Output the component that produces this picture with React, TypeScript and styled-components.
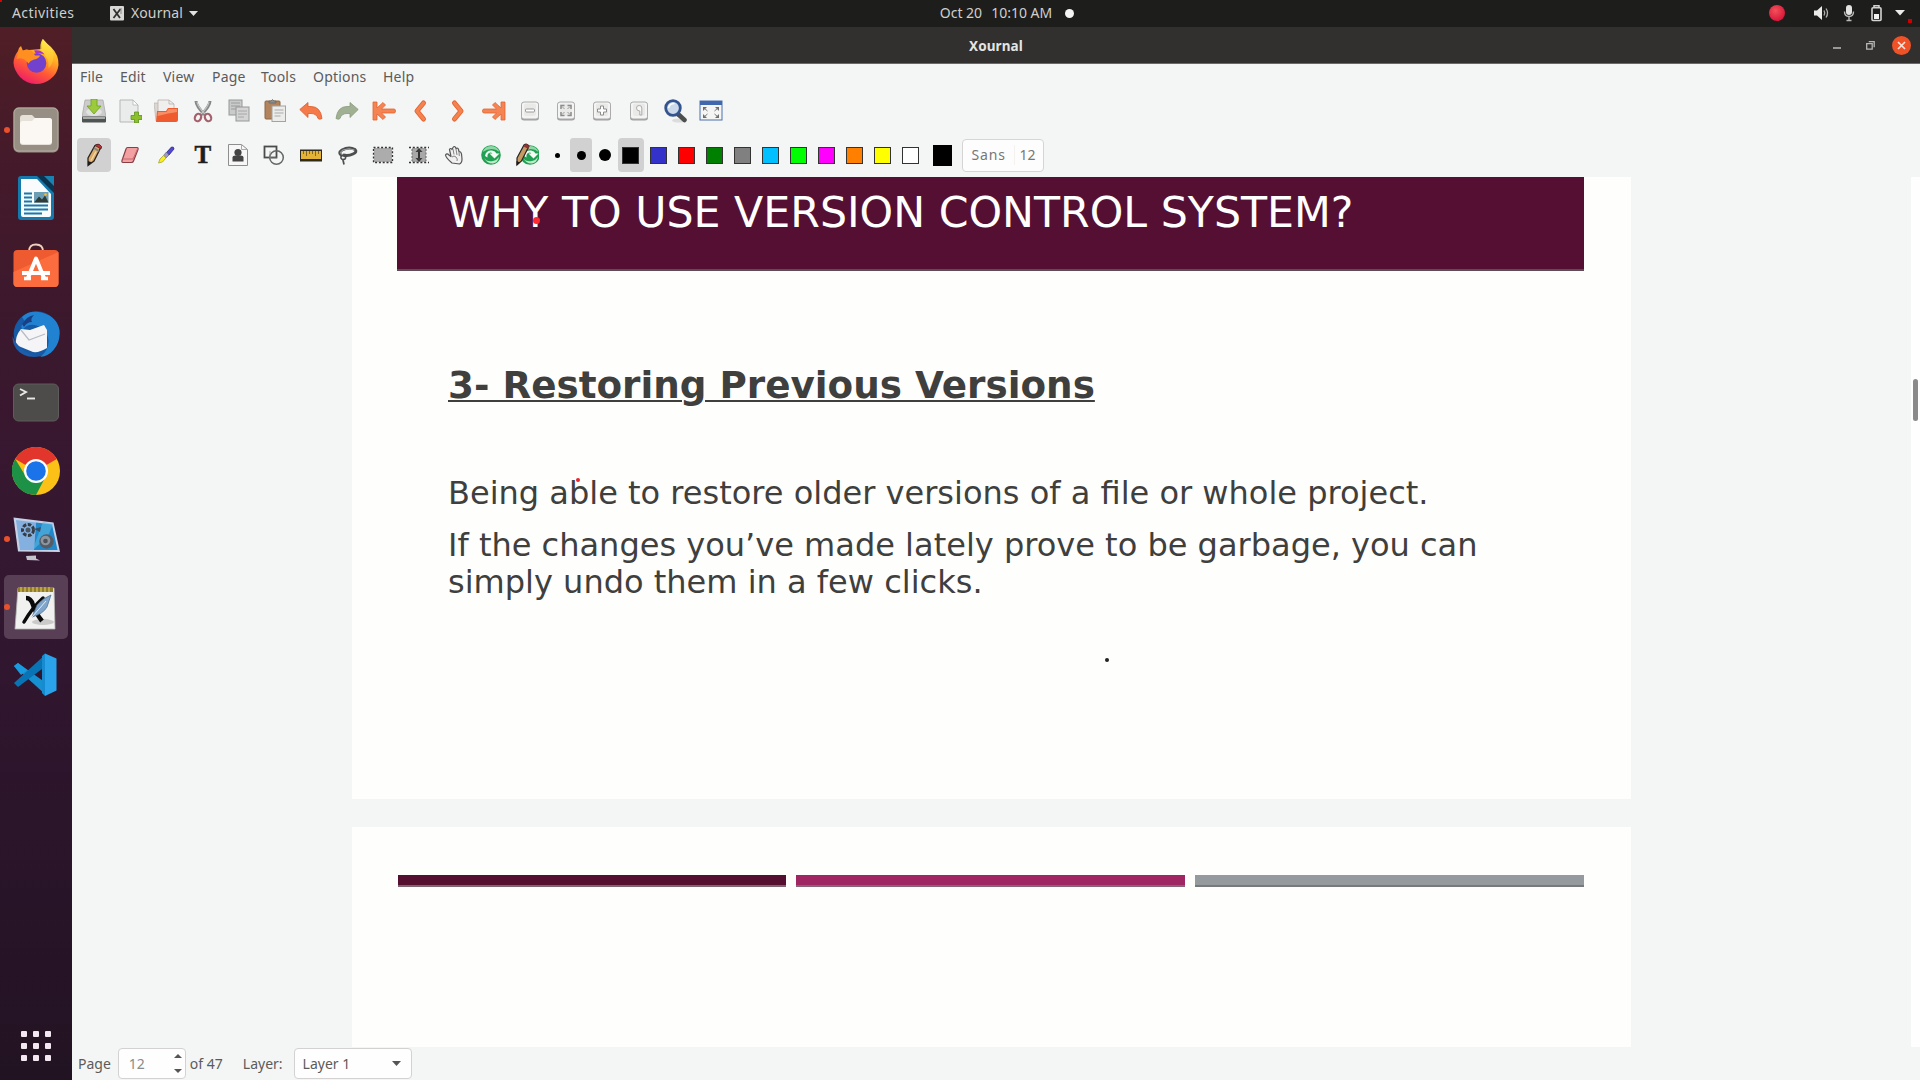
import React from 'react';
import styled, { createGlobalStyle, css } from 'styled-components';

const GlobalStyle = createGlobalStyle`
  * { box-sizing: border-box; }
  body { margin: 0; background: #f4f5f5; overflow: hidden; }
  svg { display: block; flex: none; }
`;

const Desktop = styled.div`
  position: relative;
  display: grid;
  grid-template: 27px 1053px / 72px 1848px;
  width: 1920px;
  height: 1080px;
  font: 14px/20px 'Noto Sans', 'Open Sans', sans-serif;
  color: #5b5b5b;
`;

/* ---------- system bar ---------- */
const SystemBar = styled.header`
  grid-column: 1 / 3;
  display: grid;
  grid-template-columns: 1fr auto 1fr;
  align-items: center;
  padding-bottom: 1px;
  background: #1d1d1b;
  color: #cfcfcd;
`;
const BarLeft = styled.div`
  display: flex;
  align-items: center;
  padding-left: 12px;
`;
const Activities = styled.span`
  width: 98px;
  letter-spacing: 0.4px;
`;
const AppName = styled.span`
  margin: 0 6px 0 7px;
  letter-spacing: 0.1px;
`;
const Clock = styled.div`
  display: flex;
  align-items: center;
  gap: 9px;
  padding-left: 94px;
`;
const NoticeDot = styled.i`
  width: 9px;
  height: 9px;
  margin-left: 4px;
  border-radius: 50%;
  background: #f4f4f4;
`;
const Tray = styled.div`
  display: flex;
  justify-content: flex-end;
  align-items: center;
  padding-right: 11px;
`;
const RecordDot = styled.i`
  width: 16px;
  height: 16px;
  margin-right: 28px;
  border-radius: 50%;
  background: radial-gradient(circle at 40% 35%, #f2505a, #d8163a 75%);
`;

/* ---------- dock ---------- */
const Dock = styled.nav`
  display: flex;
  flex-direction: column;
  align-items: center;
  gap: 4.1px;
  padding-top: 3px;
  background: linear-gradient(#501e26 0%, #451a2a 12%, #3a182e 32%, #341731 50%, #2b152b 75%, #221322 100%);
`;
const DockItem = styled.div<{ $active?: boolean; $running?: boolean }>`
  position: relative;
  display: flex;
  align-items: center;
  justify-content: center;
  width: 64px;
  height: 64px;
  border-radius: 5px;
  background: ${p => (p.$active ? '#583f56' : 'transparent')};
  ${p => p.$running && css`
    &::before {
      content: '';
      position: absolute;
      left: 0;
      top: 29px;
      width: 6px;
      height: 6px;
      border-radius: 50%;
      background: #e9502b;
    }
  `}
`;
const AppGrid = styled.div`
  display: grid;
  grid-template-columns: repeat(3, 6px);
  grid-auto-rows: 6px;
  gap: 6px;
  margin-top: auto;
  margin-bottom: 19px;
`;
const GridDot = styled.i`
  border-radius: 1px;
  background: #f4e9f2;
`;

/* ---------- window ---------- */
const Window = styled.main`
  display: flex;
  flex-direction: column;
  background: #f4f5f5;
`;
const TitleBar = styled.div`
  display: grid;
  grid-template-columns: 1fr auto 1fr;
  align-items: center;
  flex: none;
  height: 37px;
  padding-top: 1px;
  background: #31302e;
  border-bottom: 1px solid #6b6a69;
  color: #e4e4e2;
`;
const WindowTitle = styled.b`
  grid-column: 2;
  font-size: 13.5px;
  letter-spacing: 0.1px;
`;
const WindowButtons = styled.div`
  display: flex;
  justify-content: flex-end;
  align-items: center;
  gap: 25px;
  padding-right: 9px;
`;
const CloseButton = styled.div`
  display: grid;
  place-items: center;
  width: 19px;
  height: 19px;
  margin-left: -8px;
  border-radius: 50%;
  background: #ef5227;
`;
const MenuBar = styled.div`
  display: flex;
  flex: none;
  height: 25px;
  padding: 3px 0 0 8px;
`;
const MenuItem = styled.span<{ $w: number }>`
  width: ${p => p.$w}px;
  letter-spacing: 0.2px;
`;
const Toolbar = styled.div`
  display: flex;
  align-items: center;
  flex: none;
  height: 44px;
  padding-left: 5px;
`;
const Tool = styled.div<{ $on?: boolean; $gap?: number }>`
  display: flex;
  align-items: center;
  justify-content: center;
  width: 34px;
  height: 34px;
  margin-right: ${p => p.$gap ?? 2.1}px;
  border-radius: 4px;
  background: ${p => (p.$on ? '#d2d1d1' : 'transparent')};
`;
const Thickness = styled.div<{ $on?: boolean }>`
  display: flex;
  align-items: center;
  justify-content: center;
  width: 22px;
  height: 34px;
  margin-right: 1.8px;
  border-radius: 3px;
  background: ${p => (p.$on ? '#d2d1d1' : 'transparent')};
`;
const Nib = styled.i<{ $d: number }>`
  width: ${p => p.$d}px;
  height: ${p => p.$d}px;
  border-radius: 50%;
  background: #000;
`;
const SwatchButton = styled.div<{ $on?: boolean }>`
  display: flex;
  align-items: center;
  justify-content: center;
  width: 26px;
  height: 34px;
  margin-right: 2px;
  border-radius: 4px;
  background: ${p => (p.$on ? '#d2d1d1' : 'transparent')};
`;
const Swatch = styled.i<{ $c: string }>`
  width: 17px;
  height: 17px;
  border: 1px solid #333;
  background: ${p => p.$c};
`;
const CurrentColour = styled.i`
  width: 19px;
  height: 21px;
  margin: 0 10px 0 7px;
  background: #000;
`;
const FontButton = styled.div`
  display: flex;
  align-items: center;
  width: 82px;
  height: 33px;
  border: 1px solid #d6d5d4;
  border-radius: 4px;
  background: #fdfdfd;
  color: #777;
`;
const FontName = styled.span`
  width: 43px;
  margin-left: 9px;
  border-right: 1px solid #f4f1ee;
  letter-spacing: 0.8px;
`;
const FontSize = styled.span`
  margin-left: 5px;
`;

/* ---------- canvas ---------- */
const Canvas = styled.section`
  display: flex;
  justify-content: space-between;
  flex: none;
  height: 870px;
  padding-left: 280px;
`;
const Pages = styled.div`
  display: grid;
  grid-template-rows: 622px 220px;
  gap: 28px;
  width: 1279px;
`;
const Page = styled.article`
  background: #fefefd;
  padding: 0 47px 0 45px;
  color: #3f3f3e;
`;
const Banner = styled.h1`
  position: relative;
  height: 94px;
  margin: 0;
  padding: 10px 0 0 51px;
  background: #550f33;
  border-bottom: 2px solid #5e4d57;
  color: #fff;
  font: 42.7px/50px 'DejaVu Sans', sans-serif;
  white-space: nowrap;
`;
const Heading = styled.h2`
  width: max-content;
  margin: 92px 0 0 51px;
  font: bold 37.3px/44px 'DejaVu Sans', sans-serif;
  text-decoration: underline;
  text-decoration-thickness: 2px;
  text-underline-offset: 2px;
`;
const Body = styled.div`
  position: relative;
  display: flex;
  flex-direction: column;
  gap: 15px;
  margin: 68px 0 0 51px;
  font: 32.02px/37px 'DejaVu Sans', sans-serif;
  white-space: nowrap;
`;
const Paragraph = styled.p`
  margin: 0;
`;
const InkDot = styled.i<{ $x: number; $y: number; $d: number; $c: string; $square?: boolean }>`
  position: absolute;
  left: ${p => p.$x}px;
  top: ${p => p.$y}px;
  width: ${p => p.$d}px;
  height: ${p => p.$d}px;
  border-radius: ${p => (p.$square ? 0 : '50%')};
  background: ${p => p.$c};
`;
const Stripes = styled.div`
  display: grid;
  grid-template-columns: repeat(3, 1fr);
  gap: 10px;
  padding: 48px 0 0 0.5px;
`;
const Stripe = styled.i<{ $c: string; $edge: string }>`
  height: 12px;
  background: ${p => p.$c};
  border-bottom: 2px solid ${p => p.$edge};
`;
const ScrollTrack = styled.div`
  width: 9px;
  padding: 202px 0 0 2px;
  background: #fefefe;
`;
const ScrollThumb = styled.div`
  width: 5px;
  height: 42px;
  border-radius: 3px;
  background: #8b8a8a;
`;

/* ---------- status bar ---------- */
const StatusBar = styled.footer`
  display: flex;
  align-items: center;
  flex: none;
  height: 33px;
  padding-left: 6px;
`;
const PageSpin = styled.div`
  display: flex;
  align-items: center;
  justify-content: space-between;
  width: 68px;
  height: 31px;
  margin: 0 4px 0 7px;
  padding: 0 3px 0 10px;
  border: 1px solid #d3d2d1;
  border-radius: 4px;
  background: #fefefe;
  color: #8b8b8b;
`;
const SpinArrows = styled.div`
  display: flex;
  flex-direction: column;
  gap: 11px;
`;
const LayerLabel = styled.span`
  margin: 0 11px 0 20px;
`;
const LayerSelect = styled.div`
  display: flex;
  align-items: center;
  justify-content: space-between;
  width: 118px;
  height: 31px;
  padding: 0 10px 0 8px;
  border: 1px solid #d3d2d1;
  border-radius: 4px;
  background: #fefefe;
`;

/* ---------- toolbar drawings (24×24) ---------- */
const Glyph = ({ children }: { children: React.ReactNode }) => (
  <svg width="24" height="24" viewBox="0 0 24 24" fill="none">{children}</svg>
);

const SaveIcon = () => (
  <Glyph>
    <path d="M3 1h18l3 17H0z" fill="#cbcccb" stroke="#a3a4a3" strokeWidth=".7" />
    <ellipse cx="12" cy="13" rx="8" ry="4" fill="#e2e3e1" />
    <rect x="0" y="17.500" width="24" height="6" rx="1" fill="#4e5453" />
    <rect x="1" y="18" width="22" height="2" fill="#a9aca9" />
    <path d="M9 0h6v7h4l-7 8-7-8h4z" fill="#9bcb3c" stroke="#6f9f1d" strokeWidth=".8" />
  </Glyph>
);
const NewIcon = () => (
  <Glyph>
    <path d="M2 1h13l5 5v17H2z" fill="#eaebeb" stroke="#b5b7b6" />
    <path d="M15 1v5h5z" fill="#fff" stroke="#b5b7b6" strokeWidth=".8" />
    <path d="M16.500 13h4v3.500H24v4h-3.500V24h-4v-3.500H13v-4h3.500z" fill="#8bc02c" stroke="#5d921b" strokeWidth=".8" />
  </Glyph>
);
const OpenIcon = () => (
  <Glyph>
    <path d="M0 4h6l1 18H2z" fill="#ddd6d1" stroke="#b3aba6" strokeWidth=".6" />
    <path d="M4 1h11l5 4v10H4z" fill="#efefee" stroke="#b9b1ab" strokeWidth=".8" />
    <path d="M15 1v4h5" stroke="#b9b1ab" strokeWidth=".8" />
    <path d="M3 12h9l2-3h10v12q0 2-2 2H2z" fill="#ef5b2e" />
    <path d="M4 13h8.500l2-3H23v3q-8 1-19.500 4z" fill="#f88e66" />
  </Glyph>
);
const CutIcon = () => (
  <Glyph>
    <path d="M5 2q0 5 9 14M19 2q0 5-9 14" stroke="#878989" strokeWidth="3" />
    <path d="M6 3q1 5 8 12M18 3q-1 5-8 12" stroke="#c5c7c7" strokeWidth="1.200" />
    <ellipse cx="7" cy="18.500" rx="3" ry="3.800" stroke="#a3616c" strokeWidth="2.200" transform="rotate(28 7 18.500)" />
    <ellipse cx="17" cy="18.500" rx="3" ry="3.800" stroke="#a3616c" strokeWidth="2.200" transform="rotate(-28 17 18.500)" />
  </Glyph>
);
const CopyIcon = () => (
  <Glyph>
    <rect x="2" y="1" width="13" height="15" fill="#c9cac9" stroke="#969897" />
    <path d="M4 4h9M4 7h9M4 10h9" stroke="#9b9d9c" />
    <rect x="9" y="8" width="13" height="14" fill="#d3d4d3" stroke="#969897" />
    <path d="M11 12h9M11 15h9M11 18h6" stroke="#a6a8a7" />
  </Glyph>
);
const PasteIcon = () => (
  <Glyph>
    <rect x="2" y="2" width="15" height="18" rx="1" fill="#b1845d" stroke="#8e6745" />
    <path d="M6 4V2h2q1.500-3 3 0h2v2z" fill="#8d8f8e" stroke="#636563" strokeWidth=".7" />
    <rect x="9" y="7" width="13.500" height="15.500" fill="#ececeb" stroke="#a2a4a2" />
    <path d="M11.500 11h9M11.500 14h9M11.500 17h6" stroke="#a8aaa9" />
  </Glyph>
);
const CurvedArrow = ({ fill, edge, flip }: { fill: string; edge: string; flip?: boolean }) => (
  <Glyph>
    <path
      transform={flip ? 'translate(24 0) scale(-1 1)' : undefined}
      d="M.8 10.500 9 3.500V7.500h3q9.500 0 11 12-2.500 1.500-4 0-1.500-5-7-5H9v4z"
      fill={fill} stroke={edge} strokeWidth=".8" strokeLinejoin="round"
    />
  </Glyph>
);
const EndIcon = ({ last }: { last?: boolean }) => (
  <Glyph>
    <g transform={last ? 'translate(24 0) scale(-1 1)' : undefined} fill="#f58454" stroke="#e3622f" strokeWidth=".8" strokeLinejoin="round">
      <path d="M1 3h4v6l6-5.500L13.500 6l-4 4H22q1.500 0 1.500 2t-1.500 2H9.500l4 4-2.500 2.500L5 15v6H1z" />
    </g>
  </Glyph>
);
const ChevronIcon = ({ right }: { right?: boolean }) => (
  <Glyph>
    <g transform={right ? 'translate(24 0) scale(-1 1)' : undefined} strokeLinecap="round" strokeLinejoin="round">
      <path d="M15.500 4 9 12l6.500 8" stroke="#e5632f" strokeWidth="5" />
      <path d="M15.500 4 9 12l6.500 8" stroke="#f58350" strokeWidth="3.200" />
    </g>
  </Glyph>
);
const KeyIcon = ({ children }: { children: React.ReactNode }) => (
  <Glyph>
    <rect x="3" y="3.500" width="18" height="18" rx="3" fill="#9fa09f" />
    <rect x="3.500" y="3" width="17" height="17" rx="2.500" fill="#f4f4f3" stroke="#aaabaa" />
    <rect x="6" y="4.500" width="12" height="12.500" rx="2" fill="#e9e9e8" />
    {children}
  </Glyph>
);
const LensIcon = () => (
  <Glyph>
    <ellipse cx="16" cy="21.500" rx="7" ry="2" fill="#dcdcda" />
    <path d="m15.500 15.500 6 5.500" stroke="#4c4f50" strokeWidth="4.500" strokeLinecap="round" />
    <circle cx="10" cy="9" r="7.300" fill="#ccd9ea" stroke="#34548f" strokeWidth="2.800" />
    <path d="M5.500 9q1-4.500 6-4.500" stroke="#fff" strokeWidth="1.500" />
  </Glyph>
);
const FullscreenIcon = () => (
  <Glyph>
    <rect x="1" y="2" width="22" height="19" fill="#f5f5f4" stroke="#4a70ad" />
    <rect x="1" y="2" width="22" height="4" fill="#4069ad" />
    <path d="M4 8v4l4-4zM20 8v4l-4-4zM4 19v-4l4 4zM20 19v-4l-4 4z" fill="#6c6e6d" />
    <path d="m5 9 3.500 3M19 9l-3.500 3M5 18l3.500-3M19 18l-3.500-3" stroke="#777" />
  </Glyph>
);
const PencilIcon = () => (
  <Glyph>
    <path d="M6 15 13 2.500q4-2 6 1.500L12 18l-6 4.500z" fill="#d9ac6b" stroke="#2a221d" strokeWidth="1.300" />
    <path d="m13 2.500 6 3.500 .500-2.500q-3-4-6.500-1z" fill="#b9343a" stroke="#542022" strokeWidth=".8" />
    <path d="m12 5 5 3" stroke="#848484" strokeWidth="2" />
    <path d="m14 8.500-5 9" stroke="#f3d9a4" strokeWidth="1.300" />
    <path d="M6 18v4.500l4-3z" fill="#1d1d1d" />
  </Glyph>
);
const EraserIcon = () => (
  <Glyph>
    <path d="M9.500 4.500H19q1.500 0 1 2l-4.500 11.500q-.500 1.500-2 1.500H5q-1.500 0-1-2L8 6q.500-1.500 1.500-1.500z" fill="#f2a0a2" stroke="#873f45" strokeWidth="1.200" />
    <path d="M4.500 16h10.500l4.500-10" stroke="#c9686e" />
  </Glyph>
);
const HighlighterIcon = () => (
  <Glyph>
    <path d="m12.500 9.500 5-5.500q2.500-.500 2.500 2L15 12z" fill="#5148d6" stroke="#27247a" strokeWidth=".8" />
    <path d="m9.500 12.500 3-3.500 2.500 3-3 3z" fill="#9d9bc5" stroke="#55557a" strokeWidth=".6" />
    <path d="M4.500 20 6 16l3.500-3.500L12 15l-3.500 4z" fill="#f6ef1c" stroke="#a9a338" strokeWidth=".8" />
  </Glyph>
);
const ToolLetter = styled.b`
  padding-left: 1px;
  font: bold 25px/24px 'Liberation Serif', serif;
  color: #1e1e1e;
  -webkit-text-stroke: 0.5px #1e1e1e;
`;
const ImageIcon = () => (
  <Glyph>
    <path d="M2.500 1.500h13l6 5v16h-19z" fill="#f7f7f7" stroke="#8e8e8e" />
    <path d="M15.500 1.500v5h6" stroke="#aaa" />
    <circle cx="12" cy="9.500" r="3.600" fill="#444" />
    <path d="M6.500 18.500v-4q0-2 3-2h5q3 0 3 2v4z" fill="#444" />
  </Glyph>
);
const ShapeIcon = () => (
  <Glyph>
    <rect x="2.500" y="3.500" width="12" height="11" stroke="#4b4b4b" strokeWidth="1.800" />
    <circle cx="14.500" cy="14.500" r="6.800" stroke="#666" strokeWidth="1.500" />
    <path d="M8 8v7h7" stroke="#8a8a8a" strokeWidth=".7" />
  </Glyph>
);
const RulerIcon = () => (
  <Glyph>
    <rect x="1" y="6.500" width="22" height="12" fill="#2f2a1d" />
    <rect x="2" y="8" width="20" height="8" fill="#e2b336" />
    <path d="M4.500 8v3M7.500 8v5M10.500 8v3M13.500 8v3M16.500 8v5M19.500 8v3" stroke="#846624" />
  </Glyph>
);
const LassoIcon = () => (
  <Glyph>
    <path d="M7 12.500q-4.500-2.500 0-5.500 7-3.500 13-.500 2.500 2.500-2 4.500-5 2.500-10 1" stroke="#4c4e4f" strokeWidth="3" />
    <path d="M7 11.500q-3.500-2 1-4.500 6-2.500 11.500 0" stroke="#a5a7a8" strokeWidth="1" />
    <path d="M8 11.500q4 2.500 2 4.500-3 1.500-4-1-.500-3 3-2.500M8 17l1 4.500" stroke="#4c4e4f" strokeWidth="1.700" />
  </Glyph>
);
const SelectRectIcon = () => (
  <Glyph>
    <rect x="3" y="5" width="18" height="14" fill="#acacac" />
    <rect x="2.500" y="4.500" width="19" height="15" stroke="#333" strokeWidth="1.300" strokeDasharray="2 1.800" />
  </Glyph>
);
const VerticalSpaceIcon = () => (
  <Glyph>
    <rect x="5" y="5" width="14" height="14" fill="#a8a8a8" />
    <path d="M2 4.500h20M2 19.500h20" stroke="#333" strokeWidth="1.300" strokeDasharray="2 1.800" />
    <path d="M5 6v12M19 6v12" stroke="#666" strokeDasharray="2 1.500" />
    <path d="M12 6v12" stroke="#333" strokeWidth="2" />
    <path d="m12 5 3.500 4h-7zM12 19l3.500-4h-7z" fill="#3c3c3c" />
  </Glyph>
);
const HandIcon = () => (
  <Glyph>
    <path d="M9 20q-6-5-6.500-8 1.500-2.500 4 .500l1.500 1-1.500-7q1-2 2.500 0L10 4.500q1.500-2 2.500 0l.500 1q2-1 2.500 1l.500 2q2 0 2.500 2.500l.500 5q0 4-2.500 5z" fill="#f0f0f0" stroke="#555" strokeWidth="1.200" strokeLinejoin="round" />
    <path d="m10 6 1 5.500M13 6l1 6M16 9l.300 4M9 14q2-2 4 0t1 4" stroke="#777" strokeWidth=".9" />
  </Glyph>
);
const RecycleBall = () => (
  <>
    <circle cx="12" cy="12" r="9.800" fill="#20a052" />
    <path d="M3.500 9Q6 3 12 3q6.500.300 8.500 6-7-6-17 0z" fill="#8fd8a5" />
    <path d="M6 13q1-6 7-5.500 3.500.500 4.500 3h3l-5 5-5-5h3q-1.500-1.500-3.500-.500-2 1-1.500 4.500z" fill="#f4fcf5" />
    <path d="M5 14.500q3 5 9 3.500 4-1 6-4-1 5.500-6 6.500-6.500 0-9-6z" fill="#bfe9c9" />
  </>
);
const DefaultPenIcon = () => <Glyph><RecycleBall /></Glyph>;
const DefaultToolIcon = () => (
  <Glyph>
    <g transform="translate(3 0)"><RecycleBall /></g>
    <path d="M2 15 9 2q3-2 5 1L6.500 18 2 22z" fill="#c59a63" stroke="#2a2420" strokeWidth="1.200" />
    <path d="m8.500 3.500 5 2.500Q15 2 11.500 1 9.500 1 8.500 3.500z" fill="#8f3435" />
    <path d="M1.500 18v4.500l3.500-3z" fill="#1d1d1d" />
  </Glyph>
);

/* ---------- dock drawings (48×48) ---------- */
const DockGlyph = ({ children }: { children: React.ReactNode }) => (
  <svg width="48" height="48" viewBox="0 0 48 48" fill="none">{children}</svg>
);
const FirefoxIcon = () => (
  <DockGlyph>
    <defs>
      <linearGradient id="ffBody" x1=".8" y1="0" x2=".3" y2="1">
        <stop offset="0" stopColor="#ffe83a" /><stop offset=".35" stopColor="#ffae22" />
        <stop offset=".65" stopColor="#ff5a35" /><stop offset="1" stopColor="#ee1a6b" />
      </linearGradient>
      <linearGradient id="ffFlame" x1="0" y1="0" x2="0" y2="1">
        <stop offset="0" stopColor="#fff04a" /><stop offset="1" stopColor="#ffb02a" />
      </linearGradient>
    </defs>
    <path d="M6 13q0-3 3-5l2 5q3-2 6-1l13-1Q29 5 31 1q4 5 8 8 8 8 7.500 18-1 9-8 14-6 5-14.500 5-10-.500-16-7-6-7-6.500-14Q1.500 19 6 13z" fill="url(#ffBody)" />
    <path d="M29 14Q27 7 30.500 1q4 4.500 8 8 4 5 3 10-1 8-5 11 1-11-7.500-16z" fill="url(#ffFlame)" opacity=".85" />
    <circle cx="24.500" cy="25" r="9.800" fill="#7242cf" />
    <path d="M22 12.500q7-1 10.500 4-5-2-8 0z" fill="#a635cd" />
    <path d="M7 12q4 1 7-.500 7 0 9 6h5q-1 3-6 4-4 1-5.500 4-5-7-12-4.500z" fill="#ff8f20" />
  </DockGlyph>
);
const FilesIcon = () => (
  <DockGlyph>
    <rect x="1.500" y="1.500" width="45" height="45" rx="5" fill="#978f83" />
    <rect x="2" y="2" width="44" height="43" rx="5" stroke="#b4ada0" />
    <path d="M8 12q0-3 3-3h9l3 3h14q3 0 3 3v21q0 3-3 3H11q-3 0-3-3z" fill="#e5e1d8" />
    <path d="M8 18q0-3 3-3h9l3-3h14q3 0 3 3v20q0 3-3 3H11q-3 0-3-3z" fill="#fbf8f3" />
  </DockGlyph>
);
const WriterIcon = () => (
  <DockGlyph>
    <path d="M9 2h18l15 15v26q0 3-3 3H9q-3 0-3-3V5q0-3 3-3z" fill="#1579ac" />
    <path d="M9 5h16l14 15v21q0 2-2 2H11q-2 0-2-2z" fill="#f9fbfc" />
    <path d="m25 2 17 17V12L32 2z" fill="#0a3450" /><path d="M32 2h10v10z" fill="#1683b3" />
    <path d="M12 19.500h8M12 23.500h8M12 27.500h8M12 31.500h24M12 35.500h24M12 39.500h18" stroke="#1779ad" strokeWidth="1.800" />
    <rect x="22" y="18" width="14.500" height="10.500" fill="#6b9fb4" />
    <path d="m22 28.500 5-6 3 3 3-4 3.500 7z" fill="#2f3b39" /><circle cx="33.500" cy="20.500" r="1.300" fill="#f5bb42" />
  </DockGlyph>
);
const SoftwareIcon = () => (
  <DockGlyph>
    <path d="M17 9.500q0-7 7-7t7 7" stroke="#f1ceb9" strokeWidth="1.800" />
    <rect x="1.500" y="8" width="45" height="37" rx="4" fill="#ef5b30" />
    <path d="M1.500 30 46.500 10v31q0 4-4 4h-37q-4 0-4-4z" fill="#fb6d3f" />
    <path d="M16 36 24 16.500 32 36M10 31h28" stroke="#fff" strokeWidth="4" strokeLinejoin="round" />
    <path d="M12 36.500h7M29 36.500h7" stroke="#fff" strokeWidth="3.500" />
  </DockGlyph>
);
const ThunderbirdIcon = () => (
  <DockGlyph>
    <circle cx="24.500" cy="24" r="22.800" fill="#1659a5" />
    <path d="M10 7Q18-1 31 3q14 4 16.500 17 1 12-6 20-5 6-13 7 9-8 8-17-2-13-14-15-8-1-12 5-3-4 2-9z" fill="#2282d2" />
    <path d="M10 14q5-8 12-9-4 4-2 7-5 0-8 5z" fill="#1a3f84" />
    <path d="m9 19 9 1 14-5 3 5v18q-8 5-14 4L4 35q-1-9 5-16z" fill="#f5f5f8" />
    <path d="m9 20 8 10 16-6" stroke="#b9bcc5" strokeWidth="1.300" />
    <path d="M.5 26q0 16 16 20.500l9 .500Q12 43 6 35 2 31 .5 26z" fill="#1e5dab" />
  </DockGlyph>
);
const TerminalIcon = () => (
  <DockGlyph>
    <rect x="1.500" y="6" width="45" height="37" rx="5" fill="#4d4c4a" stroke="#5f5d5b" />
    <path d="m8 11 6 3-6 3.500" stroke="#e8e8e6" strokeWidth="1.900" /><path d="M15 20.500h8" stroke="#e8e8e6" strokeWidth="1.900" />
  </DockGlyph>
);
const ChromeIcon = () => (
  <DockGlyph>
    <circle cx="24" cy="24" r="24" fill="#fbc116" />
    <path d="M24 24 3.200 12A24 24 0 0 1 44.800 12z" fill="#e2352c" />
    <path d="M3.200 12 14.500 30.500 33.500 30 24 48A24 24 0 0 1 3.200 12z" fill="#1d9247" />
    <circle cx="24" cy="24" r="12" fill="#fff" /><circle cx="24" cy="24" r="9.800" fill="#1a73e8" />
  </DockGlyph>
);
const RecorderIcon = () => (
  <DockGlyph>
    <path d="m1.500 2.500 40 5L48 37 6 36.500z" fill="#c6d1e5" />
    <path d="m4 5 20 2.500-2 27.500H8z" fill="#84b0df" /><path d="m24 7.500 16 2 5.500 25.500H22z" fill="#2189cb" />
    <path d="M20 36 31 7l10 2-5 12z" fill="#60b9e4" opacity=".55" />
    <circle cx="16" cy="15" r="5.500" stroke="#353c46" strokeWidth="3" strokeDasharray="3.500 1.500" /><circle cx="16" cy="15" r="2.500" fill="#4a5566" />
    <path d="m22 14 7-2-1 5z" fill="#34516c" />
    <circle cx="34.500" cy="26.500" r="7.200" fill="#545c68" /><circle cx="33.500" cy="25.500" r="4.800" fill="#8c95a0" /><circle cx="33.500" cy="26" r="2.300" fill="#4c535d" />
    <path d="m14 41 10-.500v3l4 2-13-.500z" fill="#c4c4cc" />
  </DockGlyph>
);
const XournalIcon = () => (
  <DockGlyph>
    <path d="M6 5h36l1 41H3z" fill="#f1f1f0" stroke="#b7b7b5" strokeWidth=".8" />
    <ellipse cx="31" cy="39" rx="11" ry="3" fill="#cacac9" />
    <path d="M6 4.500h35V9H6z" fill="#8f7d2b" />
    <path d="M9 4v5M13 4v5M17 4v5M21 4v5M25 4v5M29 4v5M33 4v5M37 4v5" stroke="#c9b04c" strokeWidth="1.600" />
    <path d="M14 15q5 0 7 7t9 16" stroke="#0b0b0b" strokeWidth="4.500" /><path d="M31 15Q20 25 12 39" stroke="#0b0b0b" strokeWidth="3.500" strokeLinecap="round" />
    <path d="m20 34 5-12q6-7 14-10l-4 12q-4 7-15 10z" fill="#7fa5cb" stroke="#496c91" strokeWidth=".7" />
    <path d="M20 34 34 18" stroke="#e3edf6" />
  </DockGlyph>
);
const CodeIcon = () => (
  <DockGlyph>
    <path d="m2 15 4-3 28 20v12z" fill="#1591d2" />
    <path d="m2 32 4 4 28-21V3z" fill="#0874b5" />
    <path d="m2 15 4-3 9 7-6 5z" fill="#1a9be0" />
    <path d="m33 2.500 11.500 5v32L33 45V33z" fill="#2ba3ea" /><path d="M33 2.500v42.500l-3-3V5z" fill="#168bd0" />
  </DockGlyph>
);

const dockItems = [
  { icon: <FirefoxIcon /> },
  { icon: <FilesIcon />, running: true },
  { icon: <WriterIcon /> },
  { icon: <SoftwareIcon /> },
  { icon: <ThunderbirdIcon /> },
  { icon: <TerminalIcon /> },
  { icon: <ChromeIcon /> },
  { icon: <RecorderIcon />, running: true },
  { icon: <XournalIcon />, running: true, active: true },
  { icon: <CodeIcon /> },
];

const menus: [string, number][] = [['File', 40], ['Edit', 43], ['View', 49], ['Page', 49], ['Tools', 52], ['Options', 70], ['Help', 40]];

const fileTools = [
  <SaveIcon />, <NewIcon />, <OpenIcon />, <CutIcon />, <CopyIcon />, <PasteIcon />,
  <CurvedArrow fill="#f47a49" edge="#df5a2a" />,
  <CurvedArrow fill="#a0b092" edge="#8a9a7c" flip />,
  <EndIcon />, <ChevronIcon />, <ChevronIcon right />, <EndIcon last />,
  <KeyIcon><rect x="7.500" y="10" width="9" height="3" rx="1" fill="#fff" stroke="#989998" /></KeyIcon>,
  <KeyIcon><path d="M7 10V6.500h3.500M13.500 6.500H17V10M17 13v3.500h-3.500M10.500 16.500H7V13" stroke="#8a8b8a" strokeWidth="1.500" /><path d="m8 7.500 2.500 2.500M16 7.500 13.500 10M8 15.500l2.500-2.500M16 15.500 13.500 13" stroke="#999" /></KeyIcon>,
  <KeyIcon><path d="M10.500 7h3v3h3v3h-3v3h-3v-3h-3v-3h3z" fill="#fff" stroke="#8d8e8d" /></KeyIcon>,
  <KeyIcon><path d="M9.500 9q0-2.500 2.700-2.500T14.800 9v7h-2v-4q-3.300 0-3.300-3z" fill="#f8f8f8" stroke="#aaabaa" /></KeyIcon>,
  <LensIcon />, <FullscreenIcon />,
];

const penTools = [
  <PencilIcon />, <EraserIcon />, <HighlighterIcon />, <ToolLetter>T</ToolLetter>, <ImageIcon />, <ShapeIcon />,
  <RulerIcon />, <LassoIcon />, <SelectRectIcon />, <VerticalSpaceIcon />, <HandIcon />, <DefaultPenIcon />, <DefaultToolIcon />,
];

const nibs = [5, 9, 12];
const colours = ['#000000', '#3333cc', '#ff0000', '#008000', '#808080', '#00c0ff', '#00ff00', '#ff00ff', '#ff8000', '#ffff00', '#ffffff'];

const Caret = ({ w = 9, h = 5, up, fill = '#555' }: { w?: number; h?: number; up?: boolean; fill?: string }) => (
  <svg width={w} height={h} viewBox="0 0 10 6" preserveAspectRatio="none"><path d={up ? 'M0 6h10L5 0z' : 'M0 0h10L5 6z'} fill={fill} /></svg>
);

export default function App() {
  return (
    <Desktop>
      <GlobalStyle />
      <SystemBar>
        <BarLeft>
          <Activities>Activities</Activities>
          <svg width="14" height="15" viewBox="0 0 14 15">
            <rect width="14" height="14.500" rx="1" fill="#d8d8d6" />
            <path d="m3.500 3 6.500 9M10.500 3l-7 9" stroke="#30302e" strokeWidth="1.800" />
            <path d="M11 2v6" stroke="#888" />
          </svg>
          <AppName>Xournal</AppName>
          <Caret fill="#e2e2e0" />
        </BarLeft>
        <Clock><span>Oct 20</span><span>10:10 AM</span><NoticeDot /></Clock>
        <Tray>
          <RecordDot />
          <svg width="17" height="16" viewBox="0 0 17 16" fill="none">
            <path d="M1 5.500h3L9 1v14l-5-4.500H1z" fill="#ececea" />
            <path d="M11 5.500q1.500 2.500 0 5M13 3.500q3 4.500 0 9" stroke="#b2b2b0" strokeWidth="1.300" />
          </svg>
          <svg width="39" height="18" viewBox="0 0 39 18" fill="none">
            <rect x="16" y="1" width="6" height="10" rx="3" fill="#e4e4e2" />
            <path d="M14.500 7.500q0 5 4.500 5t4.500-5M19 12v4M16.500 16.500h5" stroke="#b9b9b7" strokeWidth="1.400" />
          </svg>
          <svg width="15" height="17" viewBox="0 0 15 17" fill="none">
            <path d="M5 2V.8h5V2" stroke="#d4d4d2" strokeWidth="1.500" />
            <rect x="3" y="2.800" width="9" height="12.700" rx="1" stroke="#d4d4d2" strokeWidth="1.600" />
            <rect x="5" y="9" width="5" height="5" fill="#f2f2f0" />
          </svg>
          <svg width="25" height="6" viewBox="0 0 25 6"><path d="M11 0h10l-5 5.500z" fill="#ececea" /></svg>
        </Tray>
      </SystemBar>

      <Dock>
        {dockItems.map((d, i) => (
          <DockItem key={i} $active={d.active} $running={d.running}>{d.icon}</DockItem>
        ))}
        <AppGrid>{Array.from({ length: 9 }, (_, i) => <GridDot key={i} />)}</AppGrid>
      </Dock>

      <Window>
        <TitleBar>
          <WindowTitle>Xournal</WindowTitle>
          <WindowButtons>
            <svg width="8" height="10" viewBox="0 0 8 10"><path d="M0 7h8" stroke="#c6c6c4" strokeWidth="1.400" /></svg>
            <svg width="9" height="9" viewBox="0 0 9 9" fill="none" stroke="#b6b6b4" strokeWidth="1.300">
              <path d="M.7 2.700h5.500v5.500H.7zM2.700.7h5.500v5.500" />
            </svg>
            <CloseButton>
              <svg width="9" height="9" viewBox="0 0 9 9"><path d="m1 1 7 7m0-7L1 8" stroke="#f9e3db" strokeWidth="1.700" /></svg>
            </CloseButton>
          </WindowButtons>
        </TitleBar>

        <MenuBar>
          {menus.map(([name, w]) => <MenuItem key={name} $w={w}>{name}</MenuItem>)}
        </MenuBar>

        <Toolbar>
          {fileTools.map((icon, i) => <Tool key={i} $gap={i === 9 ? 4 : 2.2}>{icon}</Tool>)}
        </Toolbar>

        <Toolbar>
          {penTools.map((icon, i) => <Tool key={i} $on={i === 0}>{icon}</Tool>)}
          {nibs.map((d, i) => <Thickness key={d} $on={i === 1}><Nib $d={d} /></Thickness>)}
          {colours.map((c, i) => <SwatchButton key={c} $on={i === 0}><Swatch $c={c} /></SwatchButton>)}
          <CurrentColour />
          <FontButton><FontName>Sans</FontName><FontSize>12</FontSize></FontButton>
        </Toolbar>

        <Canvas>
          <Pages>
            <Page>
              <Banner>
                WHY TO USE VERSION CONTROL SYSTEM?
                <InkDot $x={136} $y={40} $d={7} $c="#fb2b32" />
              </Banner>
              <Heading>3- Restoring Previous Versions</Heading>
              <Body>
                <Paragraph>Being able to restore older versions of a file or whole project.</Paragraph>
                <Paragraph>If the changes you’ve made lately prove to be garbage, you can<br />simply undo them in a few clicks.</Paragraph>
                <InkDot $x={128} $y={3} $d={4} $c="#e8262c" />
                <InkDot $x={657} $y={183} $d={4} $c="#222" />
              </Body>
            </Page>
            <Page>
              <Stripes>
                <Stripe $c="#550f30" $edge="#7c6672" />
                <Stripe $c="#a02663" $edge="#856676" />
                <Stripe $c="#949a9e" $edge="#777a7c" />
              </Stripes>
            </Page>
          </Pages>
          <ScrollTrack><ScrollThumb /></ScrollTrack>
        </Canvas>

        <StatusBar>
          <span>Page</span>
          <PageSpin>
            12
            <SpinArrows><Caret w={8} h={4} up /><Caret w={8} h={4} /></SpinArrows>
          </PageSpin>
          <span>of 47</span>
          <LayerLabel>Layer:</LayerLabel>
          <LayerSelect>Layer 1<Caret /></LayerSelect>
        </StatusBar>
      </Window>
      <InkDot $x={0} $y={0} $d={2} $c="#e00000" $square />
      <InkDot $x={1908} $y={19} $d={4} $c="#cc0000" $square />
    </Desktop>
  );
}
